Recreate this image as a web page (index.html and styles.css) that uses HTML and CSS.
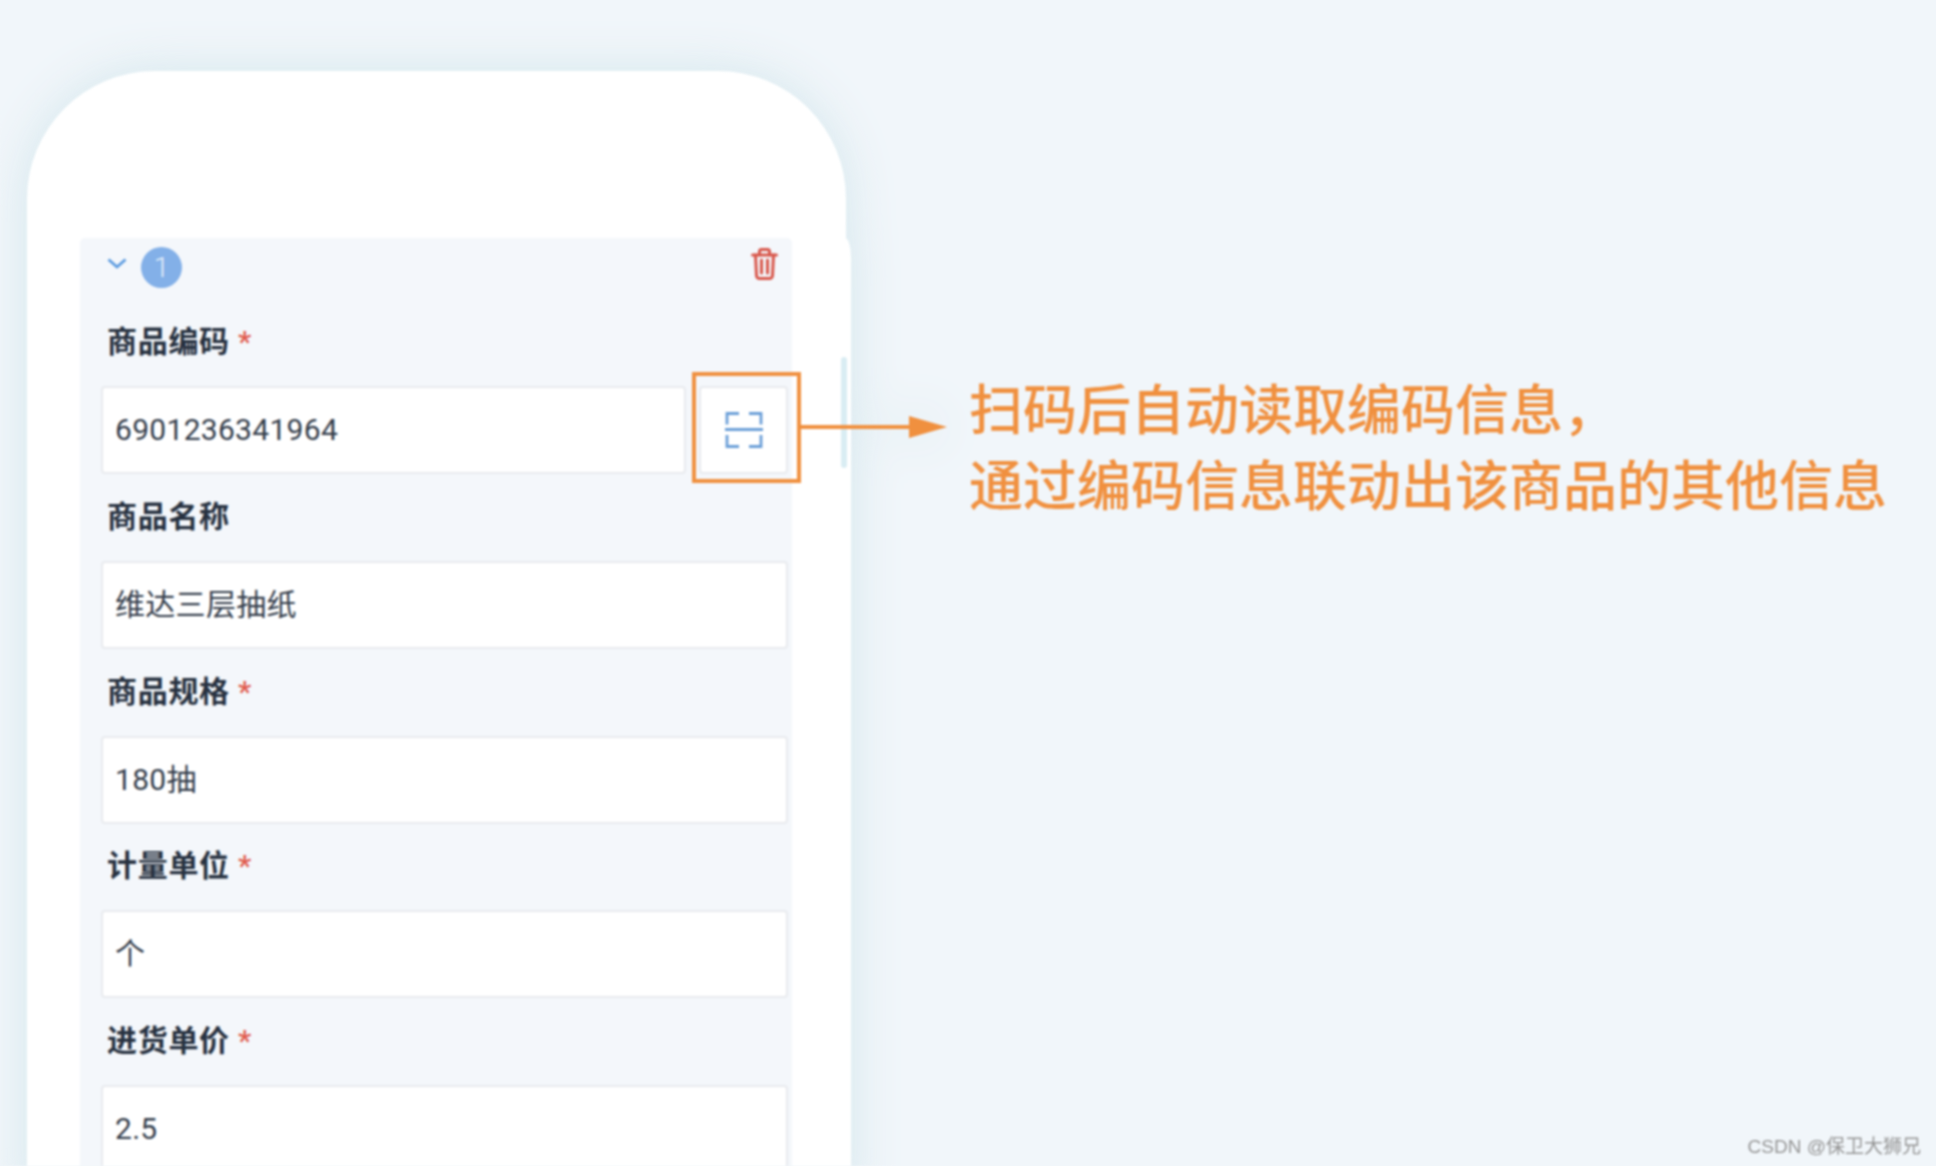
FILE: index.html
```html
<!doctype html>
<html lang="zh">
<head>
  <meta charset="utf-8">
  <title>扫码录入商品</title>
  <link rel="stylesheet" href="styles.css">
</head>
<body>
<div class="page">
  <div class="phone">
    <div class="phone-top"></div>
    <div class="phone-body">
      <div class="phone-scrollbar"></div>
      <div class="card">
        <div class="card-head">
          <svg class="chevron" viewBox="0 0 20 11" width="20" height="11"><path d="M1.5 1.5 10 9l8.5-7.5" fill="none" stroke="#5b9be0" stroke-width="2.8"/></svg>
          <span class="badge">1</span>
          <svg class="trash" viewBox="0 0 27 32" width="27" height="32">
            <g fill="none" stroke="#d8574b" stroke-width="3" stroke-linecap="round" stroke-linejoin="round">
              <path d="M1.5 7h24"/>
              <path d="M8.5 7V3.5a2 2 0 0 1 2-2h6a2 2 0 0 1 2 2V7"/>
              <path d="M4.5 7l1 20.5a3 3 0 0 0 3 3h10a3 3 0 0 0 3-3l1-20.5"/>
              <path d="M10.5 12v13M16.5 12v13"/>
            </g>
          </svg>
        </div>

        <div class="field">
          <div class="field-label">商品编码 <span class="req">*</span></div>
          <div class="scan-row">
            <div class="field-input">6901236341964</div>
            <div class="scan-btn">
              <svg viewBox="0 0 38 36" width="38" height="36">
                <g fill="none" stroke="#6b9fd8" stroke-width="2.8">
                  <path d="M14 1.5H2v11M24 1.5h12v11M2 23v11.5h12M36 23v11.5H24"/>
                  <path d="M0 17.5h38"/>
                </g>
              </svg>
              <div class="callout-box"></div>
              <div class="callout-arrow"></div>
            </div>
          </div>
        </div>

        <div class="field">
          <div class="field-label">商品名称</div>
          <div class="field-input">维达三层抽纸</div>
        </div>
        <div class="field">
          <div class="field-label">商品规格 <span class="req">*</span></div>
          <div class="field-input">180抽</div>
        </div>
        <div class="field">
          <div class="field-label">计量单位 <span class="req">*</span></div>
          <div class="field-input">个</div>
        </div>
        <div class="field">
          <div class="field-label">进货单价 <span class="req">*</span></div>
          <div class="field-input">2.5</div>
        </div>
      </div>
    </div>
  </div>

  <div class="note">
    <p>扫码后自动读取编码信息，</p>
    <p>通过编码信息联动出该商品的其他信息</p>
  </div>

  <div class="watermark">CSDN @保卫大狮兄</div>
</div>
</body>
</html>
```

FILE: styles.css
```css
html, body, p {
  margin: 0;
  padding: 0;
}

html {
  box-sizing: border-box;
}

*, *:before, *:after {
  box-sizing: inherit;
}

body {
  background: #f1f6fa;
  font-family: Roboto, 'Noto Sans CJK SC', sans-serif;
  overflow: hidden;
}

.page {
  position: relative;
  display: flex;
  align-items: flex-start;
  height: 1166px;
  padding: 71px 0 0 27px;
  overflow: hidden;
  filter: blur(0.8px);
}

/* phone frame */
.phone {
  flex: none;
  width: 824px;
  filter: drop-shadow(0 0 24px #d3e6ec);
}

.phone-top {
  width: 819px;
  height: 167px;
  background: #fff;
  border-radius: 128px 128px 0 0;
}

.phone-body {
  position: relative;
  height: 960px;
  padding-left: 53px;
  background: #fff;
  border-top-right-radius: 6px 20px;
}

.phone-scrollbar {
  position: absolute;
  top: 119px;
  right: 4px;
  width: 6px;
  height: 111px;
  background: #d9edf3;
  border-radius: 3px;
}

/* form card */
.card {
  width: 712px;
  height: 960px;
  padding: 0 4px 0 21px;
  background: #f4f7fb;
  border-radius: 5px 5px 0 0;
}

.card-head {
  display: flex;
  align-items: flex-start;
  height: 60px;
  padding: 9px 10px 0 6px;
}

.chevron {
  margin: 11px 14px 0 0;
}

.badge {
  width: 41px;
  height: 41px;
  background: #83b0e8;
  border-radius: 50%;
  color: #e8f1fb;
  font-size: 28px;
  font-weight: 300;
  line-height: 41px;
  text-align: center;
}

.trash {
  margin: 1px 0 0 auto;
}

.field {
  height: 174.8px;
}

.field-label {
  height: 88px;
  padding: 22px 0 0 6px;
  color: #273140;
  font-size: 30px;
  font-weight: 700;
  line-height: 44px;
  letter-spacing: 0.7px;
}

.req {
  margin-left: 0;
  color: #e0594b;
  font-weight: 500;
}

.field-input {
  flex: 1;
  height: 88px;
  padding-left: 12px;
  background: #fff;
  border: 2px solid #e8eaee;
  border-radius: 4px;
  color: #343d4b;
  font-size: 30px;
  line-height: 84px;
  letter-spacing: 0.3px;
}

.scan-row {
  display: flex;
  gap: 13px;
}

.scan-btn {
  position: relative;
  display: flex;
  align-items: center;
  justify-content: center;
  flex: none;
  width: 89px;
  height: 88px;
  background: #fff;
  border: 2px solid #e8eaee;
  border-radius: 4px;
}

/* orange callout over the scan button */
.callout-box {
  position: absolute;
  top: -16px;
  left: -9px;
  width: 109px;
  height: 111px;
  border: 4px solid #f0903f;
}

.callout-arrow {
  position: absolute;
  top: 37px;
  left: 98px;
  width: 112px;
  height: 4px;
  background: #f0903f;
}

.callout-arrow:after {
  content: "";
  position: absolute;
  top: -9px;
  right: -36px;
  border-style: solid;
  border-width: 11px 0 11px 38px;
  border-color: transparent transparent transparent #f0903f;
}

/* annotation */
.note {
  margin: 298px 0 0 118px;
  color: #f0903f;
  font-family: 'Noto Sans CJK SC', sans-serif;
  font-size: 54px;
  font-weight: 500;
  line-height: 76px;
  white-space: nowrap;
}

.watermark {
  position: absolute;
  right: 15px;
  bottom: 7px;
  color: #959595;
  font-family: 'Liberation Sans', 'Noto Sans CJK SC', sans-serif;
  font-size: 19px;
  line-height: 24px;
}
```
